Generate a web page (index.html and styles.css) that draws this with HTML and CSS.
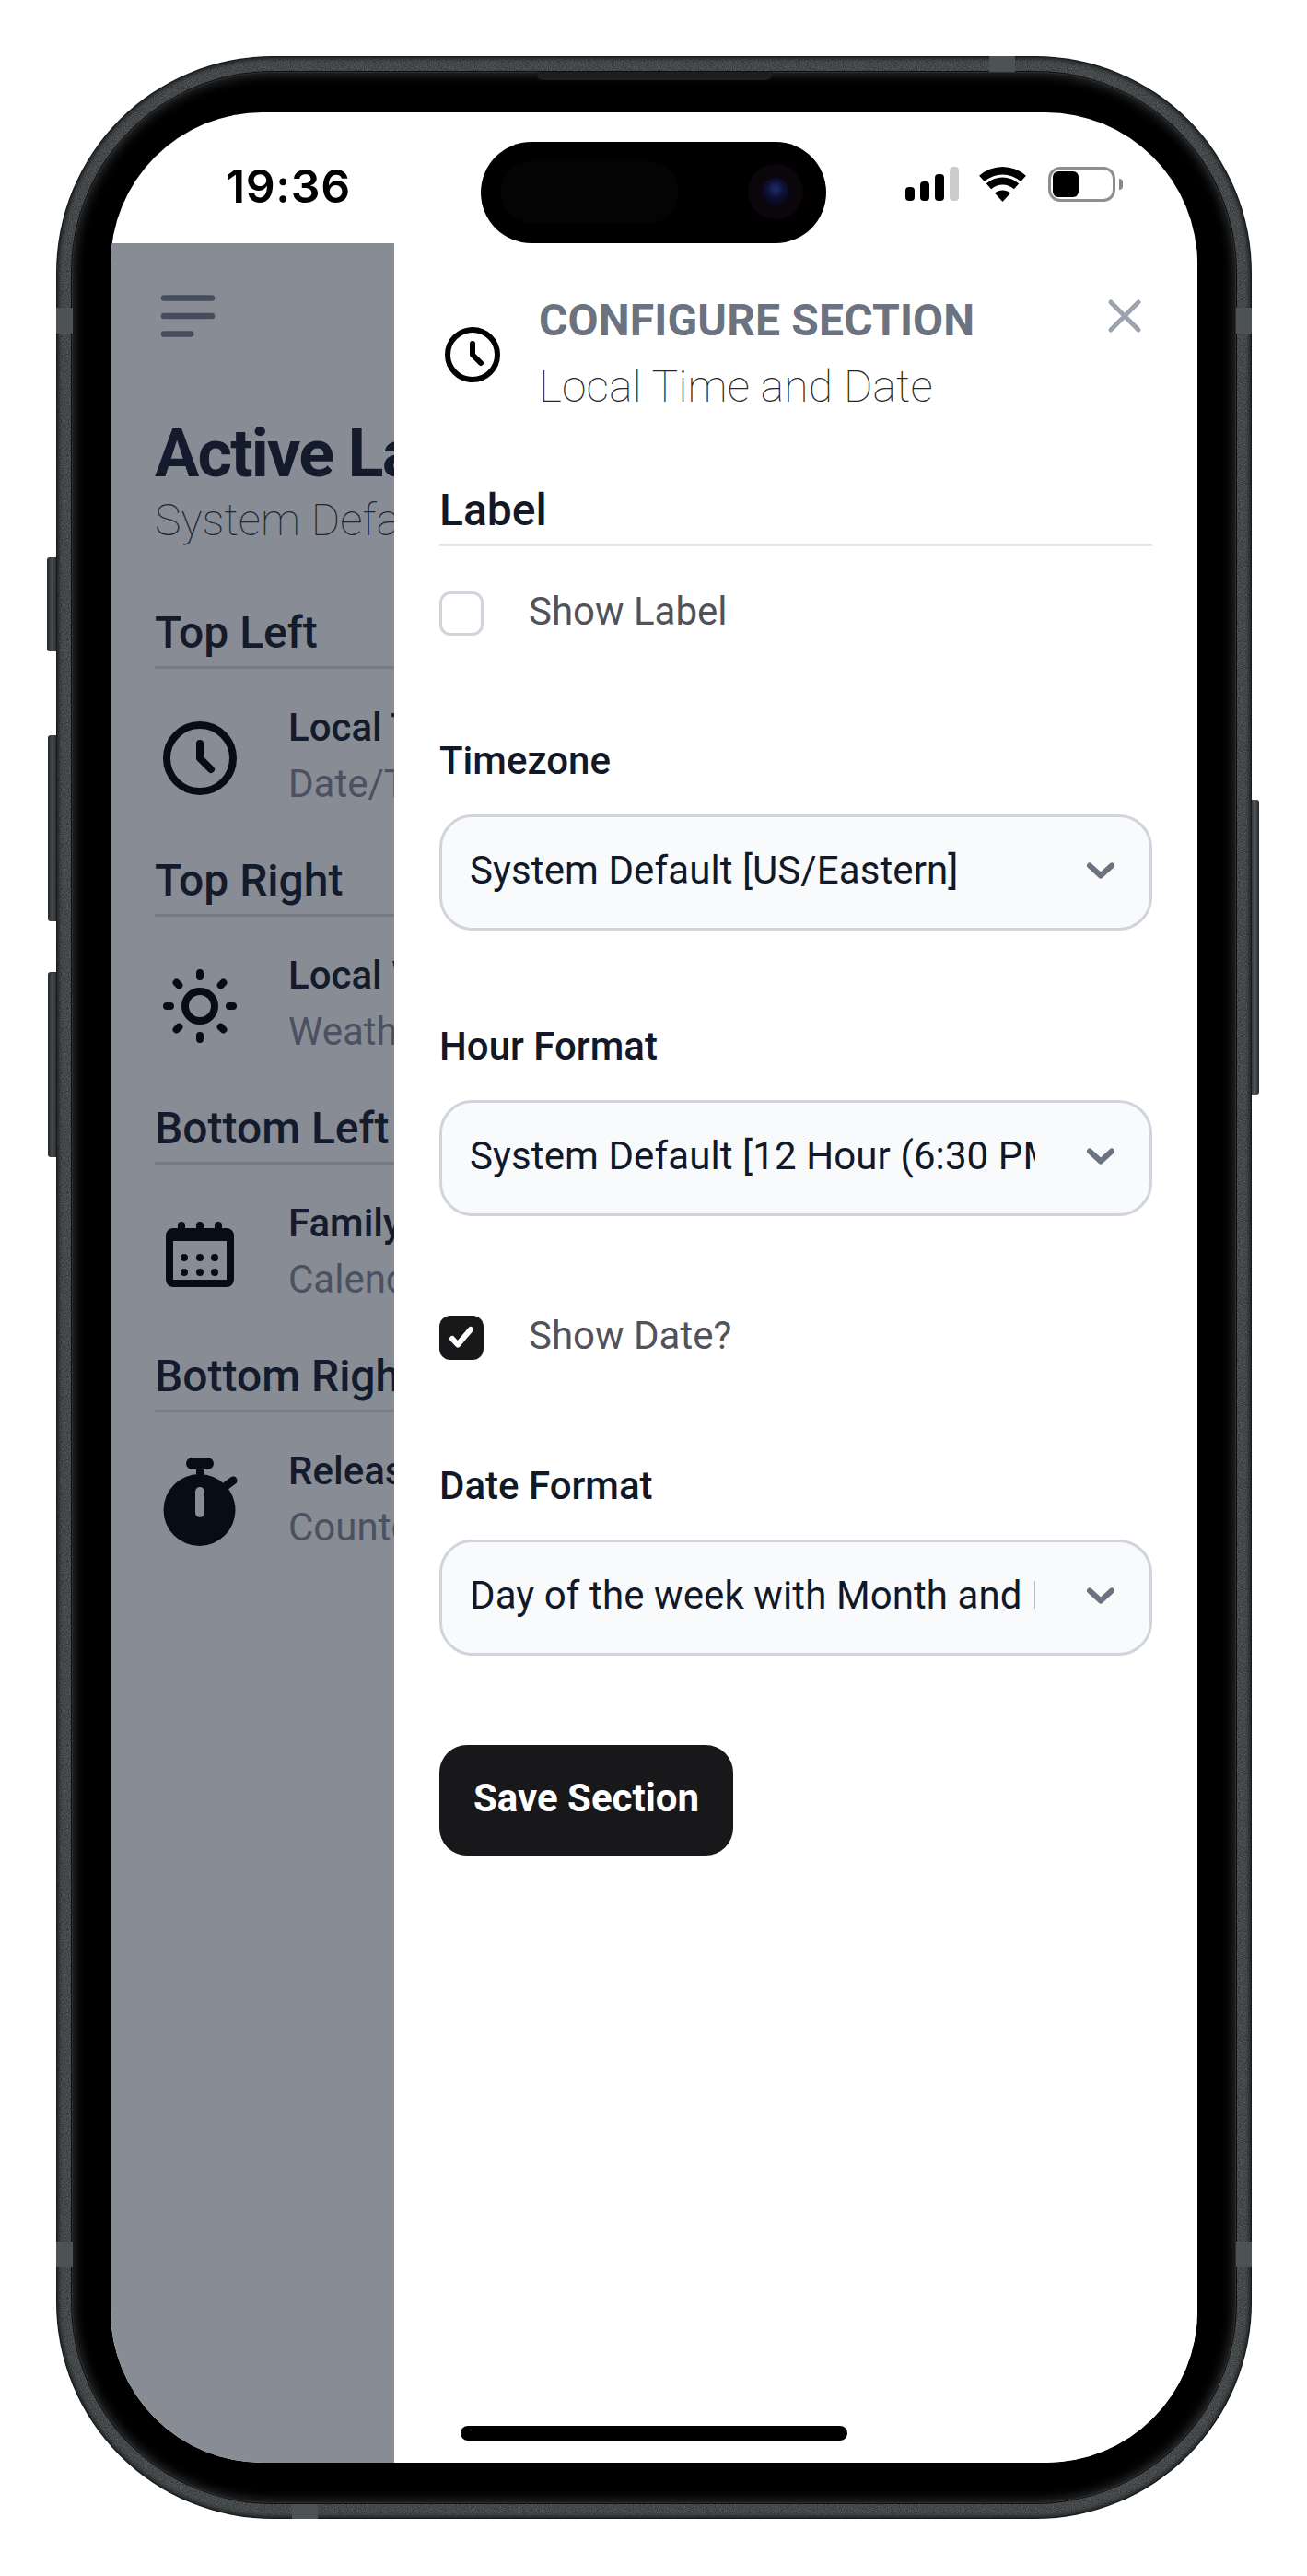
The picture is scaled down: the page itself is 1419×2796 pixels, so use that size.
FILE: index.html
```html
<!DOCTYPE html>
<html lang="en">
<head>
    <meta charset="UTF-8">
    <meta name="viewport" content="width=device-width, initial-scale=1.0">
    <title>Configure Section</title>
    <link rel="stylesheet" href="styles.css">
</head>
<body>
    <div class="phone">
        <span class="side-btn side-left btn-mute"></span>
        <span class="side-btn side-left btn-up"></span>
        <span class="side-btn side-left btn-down"></span>
        <span class="side-btn side-right btn-power"></span>
        <span class="antenna antenna-top"></span>
        <span class="antenna antenna-bottom"></span>
        <span class="antenna antenna-lt"></span>
        <span class="antenna antenna-rt"></span>
        <span class="antenna antenna-lb"></span>
        <span class="antenna antenna-rb"></span>
        <span class="speaker"></span>

        <div class="bezel">
            <div class="screen">
                <div class="status-bar">
                    <span class="time">19:36</span>
                    <div class="island">
                        <span class="island-inner"></span>
                        <span class="camera"><span class="lens"></span></span>
                    </div>
                    <div class="status-icons">
                        <div class="signal">
                            <span class="bar bar-1"></span>
                            <span class="bar bar-2"></span>
                            <span class="bar bar-3"></span>
                            <span class="bar bar-4"></span>
                        </div>
                        <svg class="wifi" viewBox="0 0 51 38" fill="#000">
                            <path d="M.1 9.800A38 38 0 0 1 50.900 9.800L45.200 16.100A29.500 29.500 0 0 0 5.800 16.100z"/>
                            <path d="M7.800 18.300A26.500 26.500 0 0 1 43.200 18.300L37.900 24.300A18.500 18.500 0 0 0 13.100 24.300z"/>
                            <path d="M17.100 28.700A12.500 12.500 0 0 1 33.900 28.700L25.500 38z"/>
                        </svg>
                        <div class="battery">
                            <div class="battery-body"><span class="battery-fill"></span></div>
                            <span class="battery-nub"></span>
                        </div>
                    </div>
                </div>

                <div class="main">
                    <div class="behind">
                        <div class="behind-page">
                            <svg class="menu-icon" viewBox="0 0 24 24" fill="none" stroke="currentColor" stroke-width="2" stroke-linecap="round" stroke-linejoin="round">
                                <path d="M4 6h16M4 12h16M4 18h9"/>
                            </svg>
                            <h1 class="page-title">Active Layout</h1>
                            <p class="page-sub">System Default</p>

                            <h2 class="slot-title">Top Left</h2>
                            <div class="slot-item">
                                <svg class="slot-icon" viewBox="0 0 24 24" fill="none" stroke="currentColor" stroke-width="2" stroke-linecap="round" stroke-linejoin="round">
                                    <path d="M12 8v4l3 3m6-3a9 9 0 11-18 0 9 9 0 0118 0z"/>
                                </svg>
                                <div>
                                    <div class="slot-name">Local Time and Date</div>
                                    <div class="slot-type">Date/Time</div>
                                </div>
                            </div>

                            <h2 class="slot-title">Top Right</h2>
                            <div class="slot-item">
                                <svg class="slot-icon" viewBox="0 0 24 24" fill="none" stroke="currentColor" stroke-width="2" stroke-linecap="round" stroke-linejoin="round">
                                    <path d="M12 3v1m0 16v1m9-9h-1M4 12H3m15.364 6.364l-.707-.707M6.343 6.343l-.707-.707m12.728 0l-.707.707M6.343 17.657l-.707.707M16 12a4 4 0 11-8 0 4 4 0 018 0z"/>
                                </svg>
                                <div>
                                    <div class="slot-name">Local Weather</div>
                                    <div class="slot-type">Weather</div>
                                </div>
                            </div>

                            <h2 class="slot-title">Bottom Left</h2>
                            <div class="slot-item">
                                <svg class="slot-icon" viewBox="0 0 96 96">
                                    <rect x="15" y="24" width="66" height="56" rx="4" fill="none" stroke="currentColor" stroke-width="8"/>
                                    <rect x="15" y="24" width="66" height="10" fill="currentColor"/>
                                    <path d="M28 17v10M48 17v10M68 17v10" stroke="currentColor" stroke-width="8" stroke-linecap="round"/>
                                    <g fill="currentColor">
                                        <circle cx="31" cy="52" r="4"/><circle cx="48" cy="52" r="4"/><circle cx="64" cy="52" r="4"/>
                                        <circle cx="31" cy="68" r="4"/><circle cx="48" cy="68" r="4"/><circle cx="64" cy="68" r="4"/>
                                    </g>
                                </svg>
                                <div>
                                    <div class="slot-name">Family Calendar</div>
                                    <div class="slot-type">Calendar</div>
                                </div>
                            </div>

                            <h2 class="slot-title">Bottom Right</h2>
                            <div class="slot-item">
                                <svg class="slot-icon" viewBox="0 0 96 96">
                                    <circle cx="47.500" cy="57" r="39" fill="currentColor"/>
                                    <rect x="33" y="0" width="30" height="13" rx="6.500" fill="currentColor"/>
                                    <rect x="44" y="8" width="8" height="16" fill="currentColor"/>
                                    <path d="M76 31l8-6" stroke="currentColor" stroke-width="9" stroke-linecap="round"/>
                                    <rect x="43" y="32" width="10" height="33" rx="5" fill="#888c94"/>
                                </svg>
                                <div>
                                    <div class="slot-name">Release Countdown</div>
                                    <div class="slot-type">Countdown</div>
                                </div>
                            </div>
                        </div>
                    </div>

                    <form class="drawer">
                        <div class="drawer-head">
                            <svg class="head-icon" viewBox="0 0 24 24" fill="none" stroke="currentColor" stroke-width="2" stroke-linecap="round" stroke-linejoin="round">
                                <path d="M12 8v4l3 3m6-3a9 9 0 11-18 0 9 9 0 0118 0z"/>
                            </svg>
                            <div class="head-text">
                                <div class="head-title">CONFIGURE SECTION</div>
                                <div class="head-sub">Local Time and Date</div>
                            </div>
                            <svg class="close-icon" viewBox="0 0 24 24" fill="none" stroke="currentColor" stroke-width="2" stroke-linecap="round" stroke-linejoin="round">
                                <path d="M6 18L18 6M6 6l12 12"/>
                            </svg>
                        </div>

                        <h3 class="group-title">Label</h3>
                        <label class="check-row row-label">
                            <span class="check"></span>
                            <span class="check-text">Show Label</span>
                        </label>

                        <div class="field">
                            <label class="field-label" for="tz">Timezone</label>
                            <div class="select-wrap">
                                <select id="tz" class="select"><option>System Default [US/Eastern]</option></select>
                                <svg class="chevron" viewBox="0 0 34 20" fill="none" stroke="currentColor" stroke-width="6" stroke-linecap="round" stroke-linejoin="round"><path d="M5 4.500l12 11 12-11"/></svg>
                            </div>
                        </div>

                        <div class="field field-gap">
                            <label class="field-label" for="hours">Hour Format</label>
                            <div class="select-wrap">
                                <select id="hours" class="select"><option>System Default [12 Hour (6:30 PM)]</option></select>
                                <svg class="chevron" viewBox="0 0 34 20" fill="none" stroke="currentColor" stroke-width="6" stroke-linecap="round" stroke-linejoin="round"><path d="M5 4.500l12 11 12-11"/></svg>
                            </div>
                        </div>

                        <label class="check-row row-date">
                            <span class="check check-on">
                                <svg viewBox="0 0 48 48" fill="none" stroke="#fff" stroke-width="6" stroke-linecap="round" stroke-linejoin="round"><path d="M14 25l6 6.500L34 15"/></svg>
                            </span>
                            <span class="check-text">Show Date?</span>
                        </label>

                        <div class="field field-date">
                            <label class="field-label" for="datefmt">Date Format</label>
                            <div class="select-wrap">
                                <select id="datefmt" class="select"><option>Day of the week with Month and Day</option></select>
                                <svg class="chevron" viewBox="0 0 34 20" fill="none" stroke="currentColor" stroke-width="6" stroke-linecap="round" stroke-linejoin="round"><path d="M5 4.500l12 11 12-11"/></svg>
                            </div>
                        </div>

                        <button type="button" class="save-btn">Save Section</button>
                    </form>
                </div>

                <span class="home-bar"></span>
            </div>
        </div>
    </div>
</body>
</html>
```

FILE: styles.css
```css
* {
    margin: 0;
    padding: 0;
    box-sizing: border-box;
}

body {
    background: #fff;
    font-family: Roboto, "Liberation Sans", sans-serif;
    color: #111827;
    padding: 61px 60px 62px 61px;
}

/* phone frame */
.phone {
    position: relative;
    width: 1298px;
    height: 2673px;
    padding: 17px;
    border-radius: 235px;
    background-color: #303436;
    background-image: url("data:image/svg+xml,%3Csvg xmlns='http://www.w3.org/2000/svg' width='200' height='200'%3E%3Cfilter id='n'%3E%3CfeTurbulence type='fractalNoise' baseFrequency='.9' numOctaves='2'/%3E%3CfeColorMatrix values='0 0 0 0 1 0 0 0 0 1 0 0 0 0 1 0 0 0 .4 -.1'/%3E%3C/filter%3E%3Crect width='200' height='200' filter='url(%23n)'/%3E%3C/svg%3E");
    box-shadow: inset 0 0 0 1px #161819, inset 0 0 4px 3px #1d2021;
}

.bezel {
    height: 100%;
    padding: 44px 42px;
    border-radius: 218px;
    background: #000;
    box-shadow: 0 0 0 1px #0d0f10, inset 0 0 0 1px #2b2d2e, inset 0 0 12px 3px #2e2e2e;
}

.side-btn {
    position: absolute;
    background: linear-gradient(90deg, #232527, #4b4f51 55%, #2c2f31);
    border-radius: 3px 0 0 3px;
}

.side-left { left: -9px; width: 9px; }
.side-right {
    right: -8px;
    width: 8px;
    border-radius: 0 3px 3px 0;
    background: linear-gradient(90deg, #3a3d3f, #505456 50%, #232527);
}
.btn-mute { top: 544px; height: 102px; left: -10px; width: 10px; }
.btn-up { top: 737px; height: 202px; }
.btn-down { top: 994px; height: 201px; }
.btn-power { top: 807px; height: 320px; }

.antenna {
    position: absolute;
    background: #4d5355;
}

.antenna-top { top: 0; left: 1013px; width: 28px; height: 17px; }
.antenna-bottom { bottom: 0; left: 256px; width: 28px; height: 16px; }
.antenna-lt { top: 273px; left: 0; width: 18px; height: 28px; }
.antenna-rt { top: 273px; right: 0; width: 17px; height: 28px; }
.antenna-lb { top: 2372px; left: 0; width: 18px; height: 28px; }
.antenna-rb { top: 2372px; right: 0; width: 17px; height: 28px; }

.speaker {
    position: absolute;
    top: 17px;
    left: 522px;
    width: 255px;
    height: 9px;
    background: #1c1e20;
    border-radius: 0 0 6px 6px;
}

.screen {
    position: relative;
    display: flex;
    flex-direction: column;
    height: 100%;
    overflow: hidden;
    border-radius: 165px;
    background: #fff;
}

/* status bar */
.status-bar {
    position: relative;
    flex: none;
    height: 142px;
}

.time {
    position: absolute;
    top: 51px;
    left: 125px;
    font-family: Inter, sans-serif;
    font-size: 50px;
    line-height: 58px;
    font-weight: 600;
    letter-spacing: .6px;
    color: #000;
}

.island {
    position: absolute;
    top: 32px;
    left: 402px;
    width: 375px;
    height: 110px;
    border-radius: 55px;
    background: #000;
}

.island-inner {
    position: absolute;
    top: 21px;
    left: 22px;
    width: 193px;
    height: 67px;
    border-radius: 33px;
    background: #040404;
}

.camera {
    position: absolute;
    top: 24px;
    left: 290px;
    width: 60px;
    height: 60px;
    display: flex;
    align-items: center;
    justify-content: center;
    border-radius: 50%;
    background: #0b060c;
}

.lens {
    width: 30px;
    height: 30px;
    border-radius: 50%;
    background: radial-gradient(circle at 50% 40%, #1d2a66 6%, #0e1134 38%, #07081a 72%);
}

.status-icons {
    position: absolute;
    top: 59px;
    left: 863px;
    display: flex;
    align-items: flex-start;
}

.signal {
    display: flex;
    align-items: flex-end;
    gap: 6px;
    height: 37px;
}

.bar {
    width: 10px;
    background: #000;
    border-radius: 4px;
}

.bar-1 { height: 15px; }
.bar-2 { height: 21px; }
.bar-3 { height: 29px; }
.bar-4 { height: 37px; background: #cccccc; }

.wifi {
    width: 51px;
    height: 38px;
    margin-left: 22px;
}

.battery {
    display: flex;
    align-items: center;
    margin-left: 24px;
}

.battery-body {
    width: 73px;
    height: 38px;
    padding: 2px;
    border: 3px solid #8f8f8f;
    border-radius: 13px;
}

.battery-fill {
    display: block;
    width: 28px;
    height: 100%;
    border-radius: 6px;
    background: #000;
}

.battery-nub {
    width: 4px;
    height: 12px;
    margin-left: 4px;
    border-radius: 0 4px 4px 0;
    background: #888;
}

.main {
    flex: 1;
    display: flex;
    min-height: 0;
}

/* page dimmed behind the drawer */
.behind {
    flex: none;
    width: 308px;
    overflow: hidden;
    background: #888c94;
}

.behind-page {
    width: 1180px;
    padding: 40px 0 0 49px;
    white-space: nowrap;
}

.menu-icon {
    display: block;
    width: 78px;
    height: 78px;
    margin-left: -4px;
    color: #454d5c;
}

.page-title {
    margin-top: 76px;
    margin-left: -1px;
    font-size: 72px;
    line-height: 70px;
    font-weight: 700;
    letter-spacing: -1.8px;
    color: #131b2c;
}

.page-sub {
    padding-top: 2px;
    margin-left: -1px;
    margin-bottom: 49px;
    font-size: 48px;
    line-height: 70px;
    font-weight: 100;
    letter-spacing: .1px;
    color: #1f2736;
}

.slot-title {
    margin-left: -1px;
    font-size: 48px;
    line-height: 70px;
    font-weight: 500;
    color: #131b2c;
    padding: 3px 0 1px;
    border-bottom: 3px solid #777b84;
}

.slot-item {
    display: flex;
    align-items: center;
    gap: 48px;
    margin: 34px 0 38px;
}

.slot-icon {
    flex: none;
    width: 96px;
    height: 96px;
    margin-top: 6px;
    color: #080c14;
    overflow: visible;
}

.slot-name {
    font-size: 42px;
    line-height: 60px;
    font-weight: 500;
    color: #131b2c;
}

.slot-type {
    padding-top: 1px;
    font-size: 42px;
    line-height: 59px;
    color: #4a5160;
}

/* drawer */
.drawer {
    flex: 1;
    min-width: 0;
    padding: 47px 49px 0;
    background: #fff;
}

.drawer-head {
    display: flex;
    align-items: flex-start;
}

.head-icon {
    flex: none;
    width: 72px;
    height: 72px;
    margin: 38px 36px 0 0;
    color: #000;
}

.head-text {
    flex: 1;
    white-space: nowrap;
}

.head-title {
    padding-top: 2px;
    font-size: 48px;
    line-height: 70px;
    font-weight: 700;
    letter-spacing: .15px;
    color: #6b7280;
}

.head-sub {
    font-size: 48px;
    line-height: 73px;
    font-weight: 100;
    letter-spacing: .2px;
    color: #27272a;
}

.close-icon {
    flex: none;
    width: 60px;
    height: 60px;
    margin-top: 2px;
    color: #9ca3af;
}

.group-title {
    margin-top: 60px;
    padding: 3px 0 1px;
    font-size: 48px;
    line-height: 70px;
    font-weight: 500;
    color: #111827;
    border-bottom: 3px solid #e5e7eb;
}

.check-row {
    display: flex;
    align-items: center;
    gap: 49px;
    height: 48px;
}

.row-label { margin: 49px 0 106px; }
.row-date { margin: 108px 0 107px; }

.check {
    flex: none;
    width: 48px;
    height: 48px;
    border: 3px solid #d1d5db;
    border-radius: 12px;
    background: #fff;
}

.check-on {
    border: none;
    background: #18181b;
}

.check-on svg {
    display: block;
}

.check-text {
    padding-bottom: 5px;
    font-size: 42px;
    line-height: 60px;
    color: #52525b;
}

.field-gap { margin-top: 96px; }

.field-label {
    display: block;
    margin-bottom: 28px;
    font-size: 42px;
    line-height: 60px;
    font-weight: 500;
    color: #111827;
}

.select-wrap {
    position: relative;
}

.select {
    display: block;
    width: 100%;
    height: 126px;
    padding: 0 124px 5px 30px;
    appearance: none;
    border: 3px solid #d1d5db;
    border-radius: 36px;
    background: #f9fafb;
    font-family: inherit;
    font-size: 42px;
    letter-spacing: .1px;
    color: #111827;
    outline: none;
}

.chevron {
    position: absolute;
    top: 51px;
    right: 39px;
    width: 34px;
    height: 20px;
    color: #6b7280;
    pointer-events: none;
}

.save-btn {
    display: block;
    margin-top: 97px;
    width: 319px;
    height: 120px;
    padding-bottom: 6px;
    border: none;
    border-radius: 30px;
    background: #18181b;
    color: #fff;
    font-family: inherit;
    font-size: 42px;
    font-weight: 700;
    cursor: pointer;
}

.home-bar {
    position: absolute;
    left: 380px;
    bottom: 24px;
    width: 420px;
    height: 16px;
    border-radius: 8px;
    background: #000;
}
```
